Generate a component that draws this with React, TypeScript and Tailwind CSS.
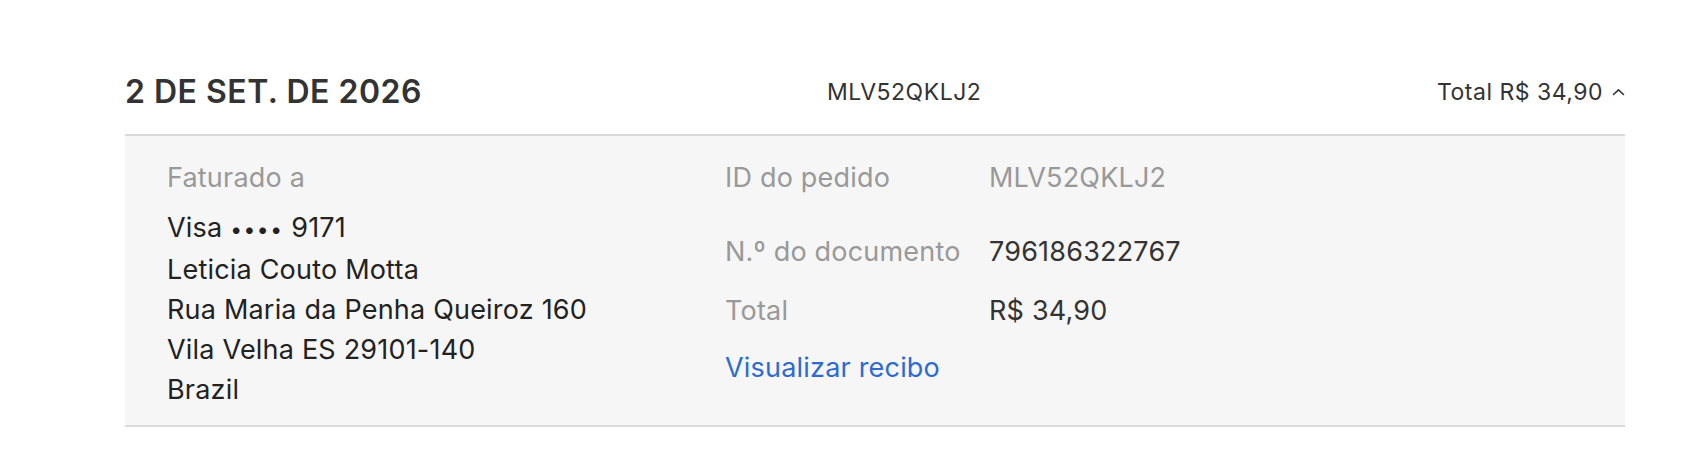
import React from 'react';

const addressLines = ['Leticia Couto Motta', 'Rua Maria da Penha Queiroz 160', 'Vila Velha ES 29101-140', 'Brazil'];

function ChevronUp() {
    return (
        <svg width="13" height="8" viewBox="0 0 13 8" fill="none" xmlns="http://www.w3.org/2000/svg">
            <path d="M1.5 6.5L6.5 1.8L11.5 6.5" stroke="#333333" strokeWidth="1.6" strokeLinecap="round" strokeLinejoin="round" />
        </svg>
    );
}

export default function App() {
    return (
        <div
            className="min-h-screen w-full bg-white pl-[125px] pt-[72px]"
            style={{ fontFamily: "Inter, 'Noto Sans', 'Liberation Sans', sans-serif" }}
        >
            <div className="w-[1500px]">
                {/* order header */}
                <div className="flex items-center border-b-2 border-[#dadada] pb-[22px]">
                    <h2 className="w-[702px] text-[32px] leading-[40px] font-semibold tracking-[0.5px] text-[#333333]">
                        2 DE SET. DE 2026
                    </h2>
                    <div className="flex-1 text-[23px] leading-[28px] tracking-[0.5px] text-[#333333]">MLV52QKLJ2</div>
                    <button className="flex items-center gap-[9px] text-[23px] leading-[28px] tracking-[0.5px] text-[#333333]">
                        <span>Total R$ 34,90</span>
                        <ChevronUp />
                    </button>
                </div>

                {/* order details */}
                <div className="flex border-b-2 border-[#dadada] bg-[#f6f6f6] pb-[15px] pl-[42px] pt-[22px] text-[27px] leading-[40px] tracking-[0.2px]">
                    <div className="w-[558px]">
                        <div className="text-[#999999]">Faturado a</div>
                        <div className="mt-[10px] text-[#222222]">
                            Visa <span className="text-[21px] tracking-[1.5px]">••••</span> 9171
                        </div>
                        {addressLines.map((line) => (
                            <div key={line} className="text-[#222222]">
                                {line}
                            </div>
                        ))}
                    </div>

                    <div className="flex flex-col">
                        <div className="flex">
                            <span className="w-[264px] text-[#999999]">ID do pedido</span>
                            <span className="text-[#999999]">MLV52QKLJ2</span>
                        </div>
                        <div className="mt-[34px] flex">
                            <span className="w-[264px] text-[#999999]">N.º do documento</span>
                            <span className="text-[#333333]">796186322767</span>
                        </div>
                        <div className="mt-[19px] flex">
                            <span className="w-[264px] text-[#999999]">Total</span>
                            <span className="text-[#333333]">R$ 34,90</span>
                        </div>
                        <a href="#" className="mt-[17px] text-[#2d6bd0]">
                            Visualizar recibo
                        </a>
                    </div>
                </div>
            </div>
        </div>
    );
}
